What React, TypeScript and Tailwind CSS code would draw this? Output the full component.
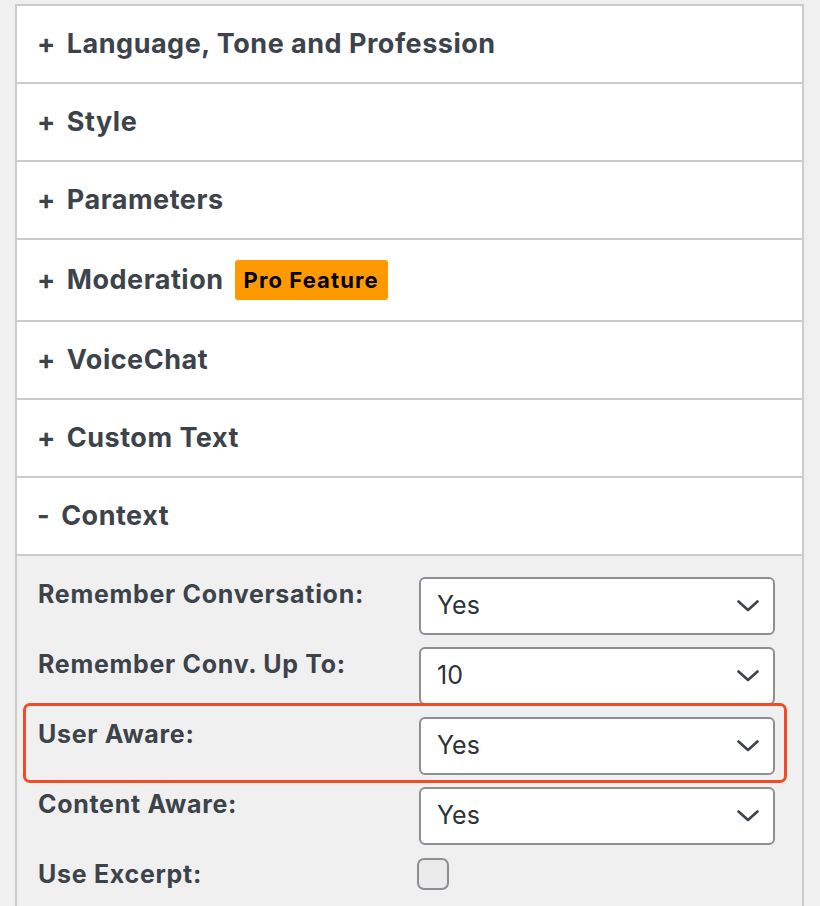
import React from "react";

const font = { fontFamily: "Inter, 'Noto Sans', sans-serif" };

function Chevron() {
  return (
    <svg width="22" height="12" viewBox="0 0 22 12" fill="none">
      <path d="M1.5 1.5 L11 10 L20.5 1.5" stroke="#3c434a" strokeWidth="2.6" strokeLinecap="round" strokeLinejoin="round" />
    </svg>
  );
}

function Select({ value }: { value: string }) {
  return (
    <div className="w-[356px] h-[58px] bg-white border-2 border-[#8c8f94] rounded-[6px] flex items-center justify-between pl-[16px] pr-[14px] box-border">
      <span className="text-[25px] text-[#2c3338]">{value}</span>
      <Chevron />
    </div>
  );
}

function Header({ sign, title, badge, tall }: { sign: string; title: string; badge?: boolean; tall?: boolean }) {
  return (
    <div className={`${tall ? "h-[82px]" : "h-[78px]"} border-b-2 border-[#cccccc] bg-white flex items-center pl-[20px] box-border`}>
      <span className="text-[27px] font-bold text-[#3c434a] tracking-[0.5px] flex items-center gap-[11px]">
        <span>{sign}</span>
        <span>{title}</span>
      </span>
      {badge && (
        <span className="ml-[11px] bg-[#ff9900] text-black text-[22px] font-bold tracking-[1.1px] px-[9px] h-[40px] flex items-center rounded-[3px]">
          Pro Feature
        </span>
      )}
    </div>
  );
}

function Row({ label, children }: { label: string; children: React.ReactNode }) {
  return (
    <div className="flex items-start">
      <div className="w-[381px] leading-[34px] text-[25px] font-bold tracking-[0.7px] text-[#3c434a]">{label}</div>
      {children}
    </div>
  );
}

export default function App() {
  return (
    <div className="w-[820px] h-[906px] bg-[#f0f0f0] overflow-hidden pt-[4px] pl-[15px]" style={font}>
      <div className="w-[789px] border-2 border-b-0 border-[#cccccc] box-border">
        <Header sign="+" title="Language, Tone and Profession" />
        <Header sign="+" title="Style" />
        <Header sign="+" title="Parameters" />
        <Header sign="+" title="Moderation" badge tall />
        <Header sign="+" title="VoiceChat" />
        <Header sign="+" title="Custom Text" />
        <Header sign="-" title="Context" />
        <div className="relative bg-[#f0f0f0] pt-[21px] pl-[21px] pr-[27px] flex flex-col gap-[12px] h-[400px]">
          <Row label="Remember Conversation:"><Select value="Yes" /></Row>
          <Row label="Remember Conv. Up To:"><Select value="10" /></Row>
          <Row label="User Aware:"><Select value="Yes" /></Row>
          <Row label="Content Aware:"><Select value="Yes" /></Row>
          <Row label="Use Excerpt:">
            <div className="ml-[-2px] mt-[1px] w-[32px] h-[32px] rounded-[7px] border-2 border-[#8c8f94] bg-[#ebebeb] box-border" />
          </Row>
          <div className="absolute left-[6px] top-[147px] w-[764px] h-[80px] border-[3px] border-[#f34b25] rounded-[7px] pointer-events-none" />
        </div>
      </div>
    </div>
  );
}
